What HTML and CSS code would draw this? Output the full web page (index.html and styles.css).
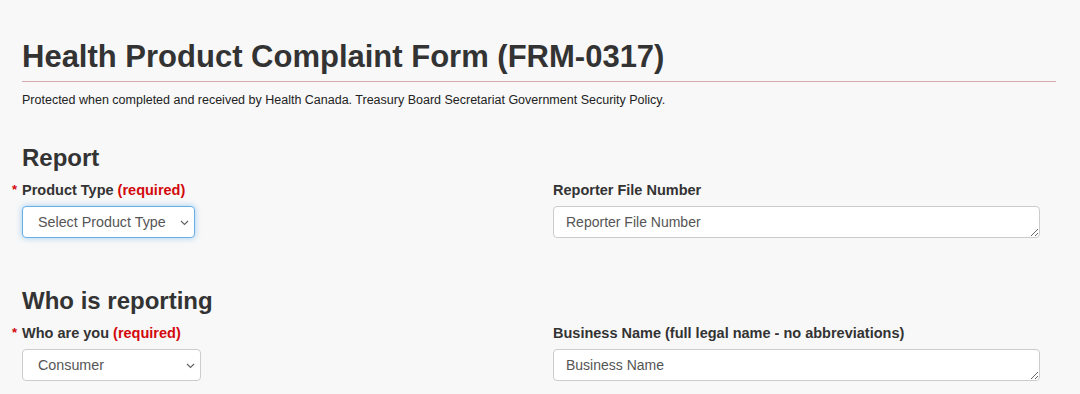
FILE: index.html
```html
<!DOCTYPE html>
<html lang="en">
<head>
<meta charset="utf-8">
<title>Health Product Complaint Form (FRM-0317)</title>
<link rel="stylesheet" href="styles.css">
</head>
<body>
<main class="page">
  <h1 class="title">Health Product Complaint Form (FRM-0317)</h1>
  <p class="notice">Protected when completed and received by Health Canada. Treasury Board Secretariat Government Security Policy.</p>

  <section class="section">
    <h2 class="section-title">Report</h2>
    <div class="row">
      <div class="field">
        <label class="label required"><span class="star">*</span>Product Type <strong class="req">(required)</strong></label>
        <div class="select-wrap select-product focused">
          <select class="select"><option>Select Product Type</option></select>
          <svg class="chev" width="9" height="6" viewBox="0 0 9 6"><path d="M1 1l3.5 3.5L8 1" fill="none" stroke="#666" stroke-width="1.2"/></svg>
        </div>
      </div>
      <div class="field">
        <label class="label">Reporter File Number</label>
        <textarea class="text" rows="1" placeholder="Reporter File Number"></textarea>
      </div>
    </div>
  </section>

  <section class="section">
    <h2 class="section-title">Who is reporting</h2>
    <div class="row">
      <div class="field">
        <label class="label required"><span class="star">*</span>Who are you <strong class="req">(required)</strong></label>
        <div class="select-wrap select-who">
          <select class="select"><option>Consumer</option></select>
          <svg class="chev" width="9" height="6" viewBox="0 0 9 6"><path d="M1 1l3.5 3.5L8 1" fill="none" stroke="#666" stroke-width="1.2"/></svg>
        </div>
      </div>
      <div class="field">
        <label class="label">Business Name (full legal name - no abbreviations)</label>
        <textarea class="text" rows="1" placeholder="Business Name"></textarea>
      </div>
    </div>
  </section>
</main>
</body>
</html>
```

FILE: styles.css
```css
* { box-sizing: border-box; }
html, body { margin: 0; padding: 0; }
body {
  background: #f8f8f8;
  font-family: "Liberation Sans", Arial, sans-serif;
  color: #333;
}
.page {
  padding: 38px 24px 0 22px;
}
.title {
  margin: 0;
  font-size: 31px;
  font-weight: bold;
  line-height: 38px;
  color: #333;
  padding-bottom: 5px;
  border-bottom: 1px solid #d4a9ac;
}
.notice {
  margin: 10px 0 0;
  font-size: 12.5px;
  line-height: 16px;
  color: #222;
}
.section { margin-top: 35px; }
.section + .section { margin-top: 48px; }
.section-title {
  margin: 0;
  font-size: 24px;
  line-height: 30px;
  font-weight: bold;
  color: #333;
}
.row {
  display: grid;
  grid-template-columns: 531px 487px;
  margin-top: 9px;
}
.field { display: flex; flex-direction: column; align-items: flex-start; }
.label {
  position: relative;
  font-size: 14.5px;
  font-weight: bold;
  line-height: 16px;
  color: #333;
  margin-bottom: 8px;
}
.star {
  position: absolute;
  left: -10px;
  top: 0;
  color: #d3080c;
  font-size: 13px;
}
.req { color: #d3080c; }
.select-wrap {
  position: relative;
  height: 32px;
  background: #fff;
  border: 1px solid #ccc;
  border-radius: 4px;
}
.select-product { width: 173px; }
.select-who { width: 179px; }
.focused {
  border-color: #66afe9;
  box-shadow: 0 0 6px rgba(102, 175, 233, 0.6);
}
.select {
  appearance: none;
  -webkit-appearance: none;
  border: 0;
  background: transparent;
  width: 100%;
  height: 100%;
  padding: 0 0 0 15px;
  font-family: "Liberation Sans", Arial, sans-serif;
  font-size: 14.3px;
  color: #555;
  outline: none;
}
.chev {
  position: absolute;
  right: 5px;
  top: 13px;
}
.text {
  width: 487px;
  height: 32px;
  border: 1px solid #ccc;
  border-radius: 4px;
  background: #fff;
  padding: 7px 12px;
  font-family: "Liberation Sans", Arial, sans-serif;
  font-size: 14px;
  line-height: 16px;
  color: #555;
  resize: vertical;
  overflow: hidden;
}
.text::placeholder { color: #555; opacity: 1; }
```
